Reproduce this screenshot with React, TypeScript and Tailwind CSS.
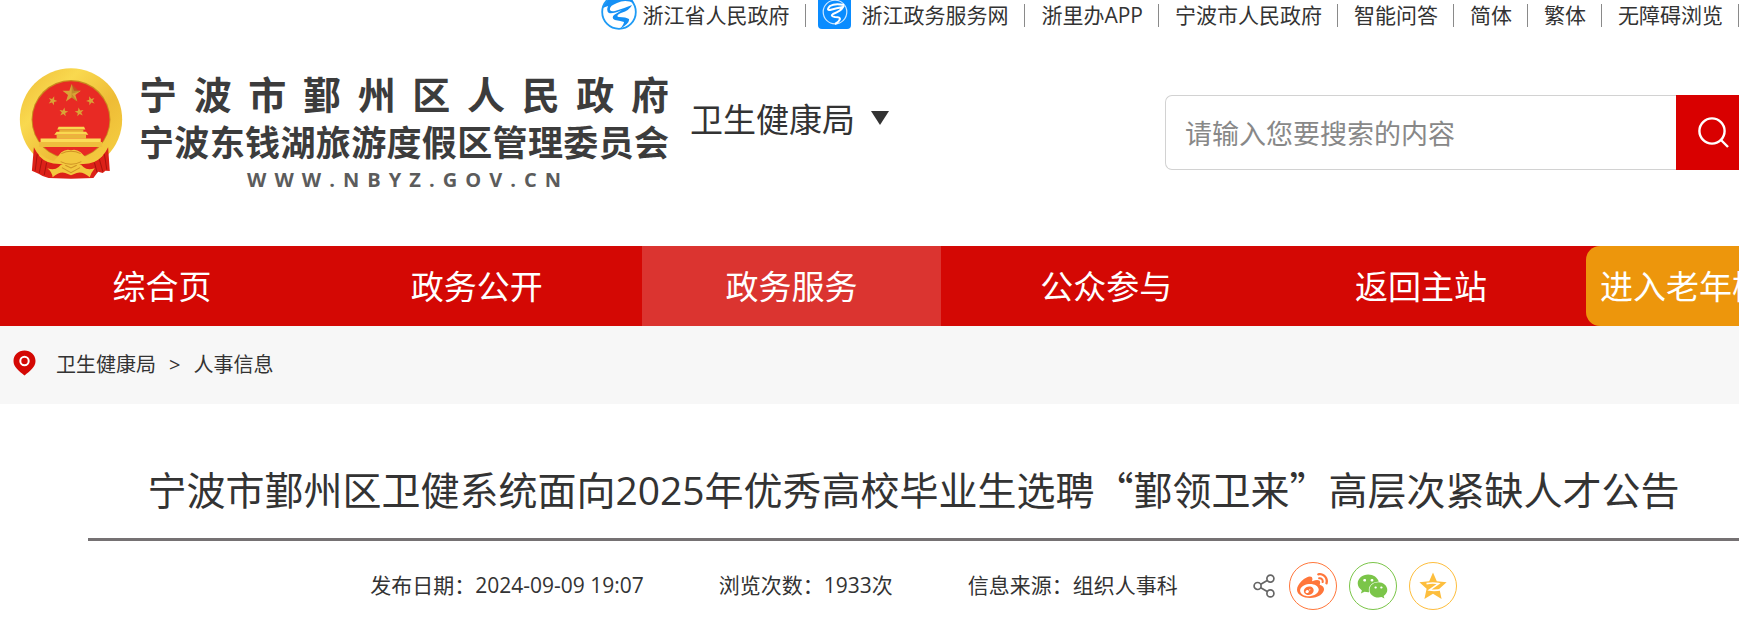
import { useState } from 'react'
import { FaWeibo, FaWeixin } from 'react-icons/fa'

const navItems = ['综合页', '政务公开', '政务服务', '公众参与', '返回主站']

const topLinks = ['浙里办APP', '宁波市人民政府', '智能问答', '简体', '繁体', '无障碍浏览']

const meta = [
    { label: '发布日期：', value: '2024-09-09 19:07' },
    { label: '浏览次数：', value: '1933次' },
    { label: '信息来源：', value: '组织人事科' },
]

const STAR = 'M0 -10 L2.4 -3.2 L9.5 -3.1 L3.8 1.2 L5.9 8.1 L0 4 L-5.9 8.1 L-3.8 1.2 L-9.5 -3.1 L-2.4 -3.2 Z'

function Emblem() {
    return (
        <svg viewBox="0 0 310 332" className="h-[111px] w-[104px] shrink-0" aria-hidden="true">
            <defs>
                <linearGradient id="gold" x1="0" y1="0" x2="1" y2="1">
                    <stop offset="0" stopColor="#eebb35" />
                    <stop offset="0.3" stopColor="#f9d94f" />
                    <stop offset="0.6" stopColor="#eebc36" />
                    <stop offset="1" stopColor="#f7d344" />
                </linearGradient>
            </defs>
            <circle cx="155" cy="154" r="153" fill="url(#gold)" />
            <circle cx="155" cy="154" r="118" fill="#c98a1e" />
            <circle cx="155" cy="155" r="115" fill="#e82a24" />
            <g fill="#d9a336">
                <path d={STAR} transform="translate(157 77) scale(2.9)" />
                <path d={STAR} transform="translate(100 98) scale(1.4) rotate(20)" />
                <path d={STAR} transform="translate(214 98) scale(1.4) rotate(-20)" />
                <path d={STAR} transform="translate(133 132) scale(1.4) rotate(10)" />
                <path d={STAR} transform="translate(180 132) scale(1.4) rotate(-10)" />
            </g>
            <path d="M157 48 L157 77 L180 70 Z M157 77 L175 101 L157 89 Z" fill="#a8741c" opacity="0.5" />
            {/* gate tower */}
            <path d="M118 176 H194 L198 184 H114 Z" fill="#f9d850" />
            <path d="M120 184 H192 V192 H120 Z" fill="#e5ae35" />
            <path d="M112 191 H200 L207 200 H105 Z" fill="#f9d850" />
            <path d="M112 200 H200 V211 H112 Z" fill="#e9b63a" />
            <path d="M64 211 H244 V221 H64 Z" fill="#fbdc58" />
            <path d="M60 221 H248 V236 H60 Z" fill="#efbd3d" />
            <path d="M77 237 H231 Q205 262 155 263 Q104 262 77 237 Z" fill="#e82a24" />
            {/* drapes */}
            <path d="M44 237 Q58 268 88 281 L126 283 Q154 299 182 283 L222 281 Q252 268 266 237 L271 308 L258 307 L250 314 L236 310 L222 329 L155 331 L88 329 L70 323 L58 316 L38 307 Z" fill="#dc2118" />
            <path d="M54 258 L48 307 M68 274 L60 314 M82 283 L75 320 M255 258 L262 304 M240 273 L250 309 M225 283 L233 312" stroke="#a8140f" strokeWidth="3" fill="none" />
            <path d="M58 250 Q78 274 104 278 L126 252 Q140 241 155 246 Q170 241 184 252 L208 277 Q234 272 252 250 L249 263 Q225 288 190 287 L155 292 L120 287 Q82 287 60 263 Z" fill="#f3c83f" />
            <path d="M84 300 Q105 308 118 296 Q130 282 155 286 Q180 282 192 296 Q205 308 226 300 Q216 312 211 327 Q190 308 172 314 L155 321 L138 314 Q120 309 100 327 Q98 310 84 300 Z" fill="#f3c83f" />
            <path d="M126 256 Q155 242 184 256 M124 280 Q155 296 186 280 M128 298 L155 313 L182 298 M138 291 L155 299 L172 291" stroke="#cf9224" strokeWidth="3" fill="none" />
        </svg>
    )
}

// the upper edge of both badges runs off the top of the bar
function ProvinceLogo() {
    return (
        <svg viewBox="0 6 36 30" className="h-[30px] w-9" aria-hidden="true">
            <circle cx="18" cy="18" r="16.8" fill="#fff" stroke="#1e9bf5" strokeWidth="1.8" />
            <path d="M2 14 Q5 5 14 2 H26 Q32 5 33 9 Q24 5 16 9 Q8 12 9 16 Q10 18 14 17 Q24 14 31 11 Q29 16 20 19 Q14 22 18 23 Q25 23 28 25 Q29 29 19 35 Q23 30 23 28 Q20 27 14 26 Q10 24 13 21 Q18 18 21 16 Q12 20 8 19 Q5 17 7 12 Q4 13 2 14 Z" fill="#1590f5" />
        </svg>
    )
}

function ServiceLogo() {
    return (
        <svg viewBox="0 3 33 30" className="h-[30px] w-[33px]" aria-hidden="true">
            <rect width="33" height="32" rx="4" fill="#0a8cff" />
            <circle cx="17" cy="15" r="11.8" fill="none" stroke="#cfe8ff" strokeWidth="1.2" />
            <path d="M26 8 Q17 6 12 9 Q8 13 12 13 Q19 11 25 10 Q23 14 15 17 Q12 19 17 20 Q22 20 22 22 Q21 25 17 27" fill="none" stroke="#fff" strokeWidth="2" />
        </svg>
    )
}

function Separator() {
    return <span className="h-[23px] w-px bg-[#8a8a8a]" />
}

function TopBar() {
    return (
        <ul className="flex h-[30px] items-center justify-end overflow-hidden whitespace-nowrap text-[21px] leading-[28px]">
            <li className="flex items-center">
                <a href="#" className="flex items-center gap-[5px] pr-4">
                    <ProvinceLogo />浙江省人民政府
                </a>
                <Separator />
            </li>
            <li className="flex items-center">
                <a href="#" className="flex items-center gap-[10px] pr-4 pl-3">
                    <ServiceLogo />浙江政务服务网
                </a>
                <Separator />
            </li>
            {topLinks.map(t => (
                <li key={t} className="flex items-center">
                    <a href="#" className="pr-[15px] pl-4">{t}</a>
                    <Separator />
                </li>
            ))}
        </ul>
    )
}

function Header() {
    const [keyword, setKeyword] = useState('')

    return (
        <div className="flex h-[216px] items-start pt-[38px] pl-[19px]">
            <a href="#" className="flex text-[#3c3c3c]">
                <Emblem />
                <span className="ml-4 flex w-[530px] flex-col font-bold whitespace-nowrap">
                    <span className="text-[38px] leading-[52px] [text-align-last:justify]">宁波市鄞州区人民政府</span>
                    <span className="text-[35px] leading-[46px] [text-align-last:justify]">宁波东钱湖旅游度假区管理委员会</span>
                    <span className="mx-auto w-[314px] font-['Open_Sans'] text-[20px] leading-[28px] text-[#5c5c5c] [text-align-last:justify]">W W W . N B Y Z . G O V . C N</span>
                </span>
            </a>
            <button type="button" aria-haspopup="menu" className="mt-7 ml-[21px] flex items-center gap-4 text-[33px] leading-[48px] whitespace-nowrap">
                卫生健康局
                <svg viewBox="0 0 18 14" className="mb-1 h-[14px] w-[18px]" aria-hidden="true">
                    <path d="M0 0 H18 L9 14 Z" fill="#333" />
                </svg>
            </button>
            <form className="mt-[27px] ml-auto flex h-[75px] w-[574px]" onSubmit={e => e.preventDefault()}>
                <input
                    value={keyword} onChange={e => setKeyword(e.target.value)}
                    aria-label="搜索" placeholder="请输入您要搜索的内容"
                    className="min-w-0 flex-1 rounded-l-[7px] border border-r-0 border-[#d2d2d2] px-[19px] pt-[3px] text-[27px] outline-none placeholder:text-[#888]"
                />
                <button type="submit" aria-label="搜索" className="flex w-[63px] items-center bg-[#d90000] pl-[22px]">
                    <svg viewBox="0 0 31 31" className="h-[31px] w-[31px]" fill="none" stroke="#fff" strokeWidth="2.4" aria-hidden="true">
                        <circle cx="14" cy="14" r="12.6" />
                        <path d="M22.5 22.5 L30 30" />
                    </svg>
                </button>
            </form>
        </div>
    )
}

function ShareIcons() {
    return (
        <div className="flex items-center gap-3">
            <svg viewBox="0 0 22 24" className="mr-[2px] h-6 w-[22px]" fill="none" stroke="#666" strokeWidth="1.7" aria-hidden="true">
                <circle cx="4.6" cy="12" r="3.5" />
                <circle cx="17.4" cy="4.6" r="3.5" />
                <circle cx="17.4" cy="19.4" r="3.5" />
                <path d="M7.8 10.2 L14.2 6.4 M7.8 13.8 L14.2 17.6" />
            </svg>
            <a href="#" aria-label="微博" className="flex size-12 items-center justify-center rounded-full border border-[#ff763b] text-[#ff763b]">
                <FaWeibo size={31} />
            </a>
            <a href="#" aria-label="微信" className="flex size-12 items-center justify-center rounded-full border border-[#7bc549] text-[#7bc549]">
                <FaWeixin size={31} />
            </a>
            <a href="#" aria-label="QQ空间" className="flex size-12 items-center justify-center rounded-full border border-[#fdbe3d] text-[#fdbe3d]">
                <svg viewBox="0 0 28 28" className="size-7" aria-hidden="true">
                    <path d="M14 0.5 L17.8 9.3 L27.6 10.2 L20.4 16.8 L22.6 27 L14 21.8 L5.4 27 L7.6 16.8 L0.4 10.2 L10.2 9.3 Z" fill="currentColor" />
                    <path d="M7.5 11.6 Q14 10.4 19.6 11.6 L10.4 18 Q16 19 23 17.4" fill="none" stroke="#fff" strokeWidth="1.6" />
                </svg>
            </a>
        </div>
    )
}

export default function App() {
    return (
        <div className="min-h-screen overflow-x-hidden bg-white font-['Open_Sans','Noto_Sans_CJK_SC',sans-serif] text-[#333]" lang="zh-CN">
            <header>
                <TopBar />
                <Header />
                <nav className="flex h-20 gap-[15px] bg-[#d40804] pl-3 text-[33px] leading-[82px] whitespace-nowrap text-white">
                    {navItems.map(item => (
                        <a key={item} href="#" className={`flex-1 text-center ${item === '政务服务' ? 'bg-[#db3430]' : ''}`}>{item}</a>
                    ))}
                    <a href="#" className="w-[153px] shrink-0 overflow-hidden rounded-l-[14px] bg-[#ed960c] pl-[14px]">进入老年模式</a>
                </nav>
            </header>

            <div className="flex h-[78px] items-center bg-[#f7f7f7] pl-[13px] text-[20px]">
                <svg viewBox="0 0 23 26" className="mb-1 h-[26px] w-[23px]" aria-hidden="true">
                    <path d="M11.5 0.5 C5.4 0.5 0.5 5 0.5 11 C0.5 17 6 21 11.5 25.5 C17 21 22.5 17 22.5 11 C22.5 5 17.6 0.5 11.5 0.5 Z" fill="#d40804" />
                    <circle cx="11.5" cy="11" r="4.2" fill="#d40804" stroke="#fff" strokeWidth="2" />
                </svg>
                <a href="#" className="ml-5">卫生健康局</a>
                <span className="mx-[13px]">&gt;</span>
                <a href="#">人事信息</a>
            </div>

            <main className="pl-[88px]">
                {/* the quoted part uses the CJK family so its quotation marks are full width */}
                <h1 className="border-b-3 border-[#757173] pt-[54px] pb-[18px] text-center text-[39px] leading-[60px] whitespace-nowrap">
                    宁波市鄞州区卫健系统面向2025年优秀高校毕业生选聘<span className="font-['Noto_Sans_CJK_SC',sans-serif]">“鄞领卫来”</span>高层次紧缺人才公告
                </h1>
                <div className="flex items-center justify-center gap-[75px] pt-[21px] text-[21px] whitespace-nowrap">
                    {meta.map(m => <span key={m.label}>{m.label}{m.value}</span>)}
                    <ShareIcons />
                </div>
            </main>
        </div>
    )
}
